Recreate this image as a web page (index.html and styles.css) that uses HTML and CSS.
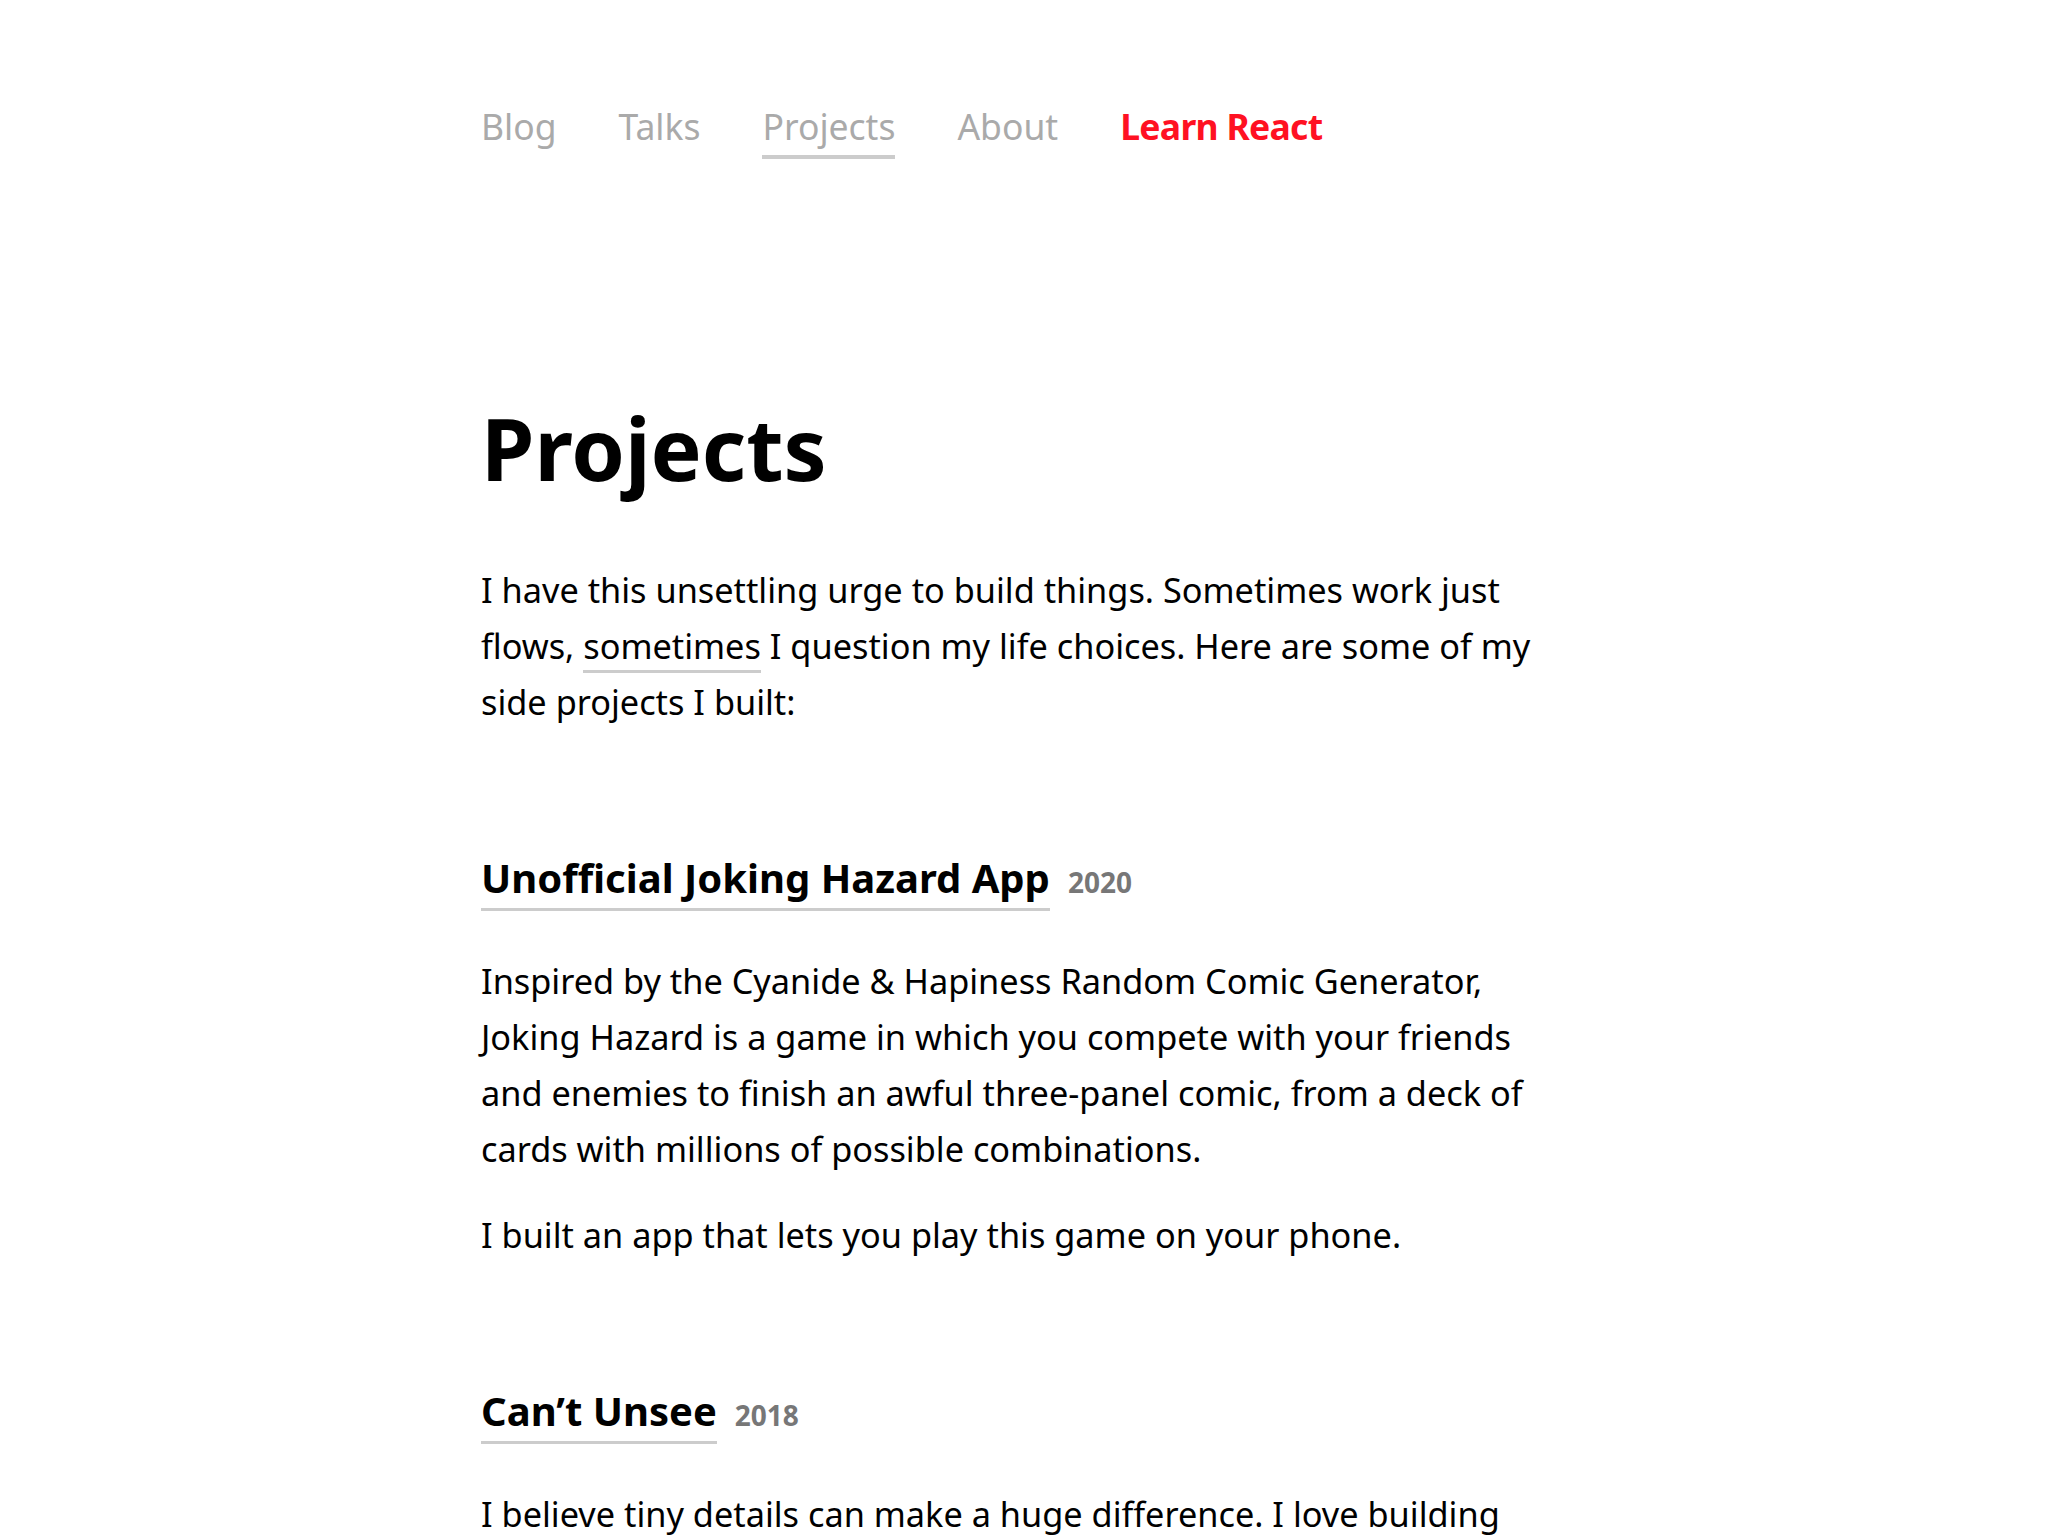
FILE: index.html
```html
<!DOCTYPE html>
<html lang="en">
<head>
<meta charset="utf-8">
<title>Projects</title>
<link rel="stylesheet" href="styles.css">
</head>
<body>
<div class="page">
  <nav class="nav">
    <a class="nav-link" href="#">Blog</a>
    <a class="nav-link" href="#">Talks</a>
    <a class="nav-link is-active" href="#">Projects</a>
    <a class="nav-link" href="#">About</a>
    <a class="nav-link nav-link--accent" href="#">Learn React</a>
  </nav>
  <main class="content">
    <h1 class="title">Projects</h1>
    <p class="text">I have this unsettling urge to build things. Sometimes work just flows, <a class="inline-link" href="#">sometimes</a> I question my life choices. Here are some of my side projects I built:</p>

    <section class="project">
      <h3 class="project-title"><a class="project-link" href="#">Unofficial Joking Hazard App</a><span class="year">2020</span></h3>
      <p class="text">Inspired by the Cyanide &amp; Hapiness Random Comic Generator, Joking Hazard is a game in which you compete with your friends and enemies to finish an awful three-panel comic, from a deck of cards with millions of possible combinations.</p>
      <p class="text">I built an app that lets you play this game on your phone.</p>
    </section>

    <section class="project">
      <h3 class="project-title"><a class="project-link" href="#">Can’t Unsee</a><span class="year">2018</span></h3>
      <p class="text">I believe tiny details can make a huge difference. I love building interfaces that feel right, so I made a little game to test how well you can spot the details.</p>
    </section>
  </main>
</div>
</body>
</html>
```

FILE: styles.css
```css
* { box-sizing: border-box; }
html, body { margin: 0; padding: 0; background: #fff; }
body {
  font-family: "Noto Sans", "Liberation Sans", sans-serif;
  color: #000;
  -webkit-font-smoothing: antialiased;
}
.page {
  max-width: 1086px;
  margin: 0 auto;
}
.nav {
  display: flex;
  align-items: flex-start;
  gap: 62px;
  padding-top: 101px;
  font-size: 35.5px;
  line-height: 50px;
}
.nav-link {
  color: #aaa;
  text-decoration: none;
  border-bottom: 4px solid transparent;
  padding-bottom: 4px;
}
.nav-link.is-active { border-bottom-color: #ccc; }
.nav-link--accent {
  color: #ff1122;
  font-weight: 700;
  letter-spacing: -0.7px;
}
.content { padding-top: 239px; }
.title {
  margin: 0 0 64px;
  font-size: 86px;
  line-height: 100px;
  font-weight: 700;
}
.text {
  margin: 0 0 30px;
  font-size: 34.3px;
  line-height: 56px;
}
.inline-link {
  color: inherit;
  text-decoration: none;
  padding-bottom: 1px;
  border-bottom: 3px solid #ccc;
}
.project { margin-top: 120px; }
.project-title {
  margin: 0 0 43px;
  font-size: 40px;
  line-height: 56px;
  font-weight: 700;
}
.project-link {
  color: inherit;
  text-decoration: none;
  padding-bottom: 3px;
  border-bottom: 3px solid #ccc;
}
.year {
  margin-left: 18px;
  font-size: 28px;
  color: #777;
  font-weight: 700;
}
```
